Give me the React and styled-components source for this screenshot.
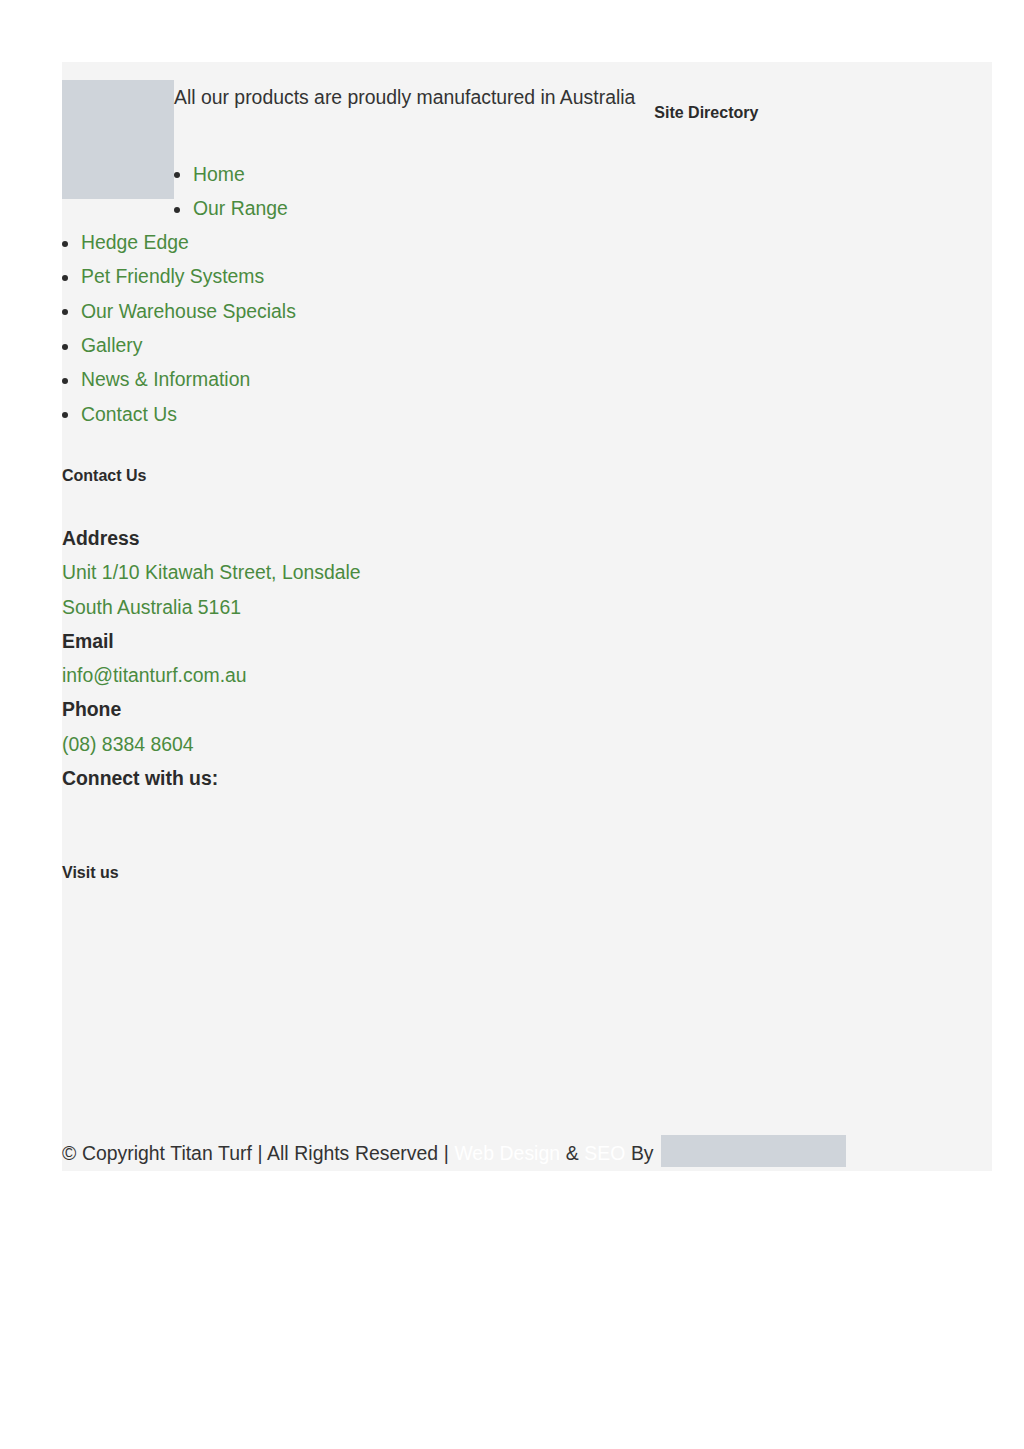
import React from "react";
import styled, { createGlobalStyle } from "styled-components";

const GlobalStyle = createGlobalStyle`
  html, body { margin: 0; padding: 0; background: #ffffff; }
  body { font-family: "Liberation Sans", Arial, sans-serif; }
`;

const Page = styled.div`
  box-sizing: border-box;
  min-height: 1449px;
  padding: 62px 32px 0 62px;
`;

const Footer = styled.footer`
  display: flow-root;
  background: #f4f4f4;
  padding: 18px 0 1px;
  font-size: 19.4px;
  line-height: 34.3px;
  color: #333333;
`;

const Logo = styled.div`
  float: left;
  width: 112px;
  height: 119px;
  background: #cfd4da;
`;

const TopRow = styled.div`
  display: flex;
  align-items: flex-start;
`;

const Tagline = styled.p`
  margin: 0;
`;

const SmallHeading = styled.h4`
  margin: ${(p) => p.$top || "0"} 0 0 ${(p) => p.$left || "0"};
  font-size: 16px;
  line-height: normal;
  font-weight: 700;
  color: #2b2b2b;
`;

const NavList = styled.ul`
  margin: 34.8px 0 0;
  padding: 0;
  list-style: none;
`;

const NavItem = styled.li`
  &::before {
    content: "";
    display: inline-block;
    width: 6px;
    height: 6px;
    border-radius: 50%;
    background: #2b2b2b;
    margin-right: 13px;
    vertical-align: 2.3px;
  }
`;

const GreenLink = styled.a`
  color: #4a8b3f;
  text-decoration: none;
`;

const ContactBlock = styled.div`
  margin-top: 36.2px;
`;

const Label = styled.div`
  font-weight: 700;
  color: #2b2b2b;
`;

const Value = styled.div``;

const SocialRow = styled.div`
  height: 34.3px;
`;

const MapArea = styled.div`
  height: 253px;
`;

const Copyright = styled.p`
  margin: 0;
  word-spacing: 0.3px;
`;

const Credit = styled.span`
  color: #ffffff;
`;

const BrandBox = styled.span`
  display: inline-block;
  width: 185px;
  height: 32px;
  margin-left: 7px;
  background: #cfd4da;
  vertical-align: -7px;
`;

const navItems = [
  "Home",
  "Our Range",
  "Hedge Edge",
  "Pet Friendly Systems",
  "Our Warehouse Specials",
  "Gallery",
  "News & Information",
  "Contact Us",
];

export default function App() {
  return (
    <>
      <GlobalStyle />
      <Page>
        <Footer>
          <Logo />
          <TopRow>
            <Tagline>All our products are proudly manufactured in Australia</Tagline>
            <SmallHeading $top="23.8px" $left="19px">Site Directory</SmallHeading>
          </TopRow>
          <NavList>
            {navItems.map((item) => (
              <NavItem key={item}>
                <GreenLink href="#">{item}</GreenLink>
              </NavItem>
            ))}
          </NavList>

          <SmallHeading $top="35.8px">Contact Us</SmallHeading>
          <ContactBlock>
            <Label>Address</Label>
            <Value>
              <GreenLink href="#">Unit 1/10 Kitawah Street, Lonsdale</GreenLink>
            </Value>
            <Value>
              <GreenLink href="#">South Australia 5161</GreenLink>
            </Value>
            <Label>Email</Label>
            <Value>
              <GreenLink href="#">info@titanturf.com.au</GreenLink>
            </Value>
            <Label>Phone</Label>
            <Value>
              <GreenLink href="#">(08) 8384 8604</GreenLink>
            </Value>
            <Label>Connect with us:</Label>
            <SocialRow />
          </ContactBlock>

          <SmallHeading $top="34px">Visit us</SmallHeading>
          <MapArea />

          <Copyright>
            © Copyright Titan Turf | All Rights Reserved | <Credit>Web Design</Credit> &amp;{" "}
            <Credit>SEO</Credit> By<BrandBox />
          </Copyright>
        </Footer>
      </Page>
    </>
  );
}
